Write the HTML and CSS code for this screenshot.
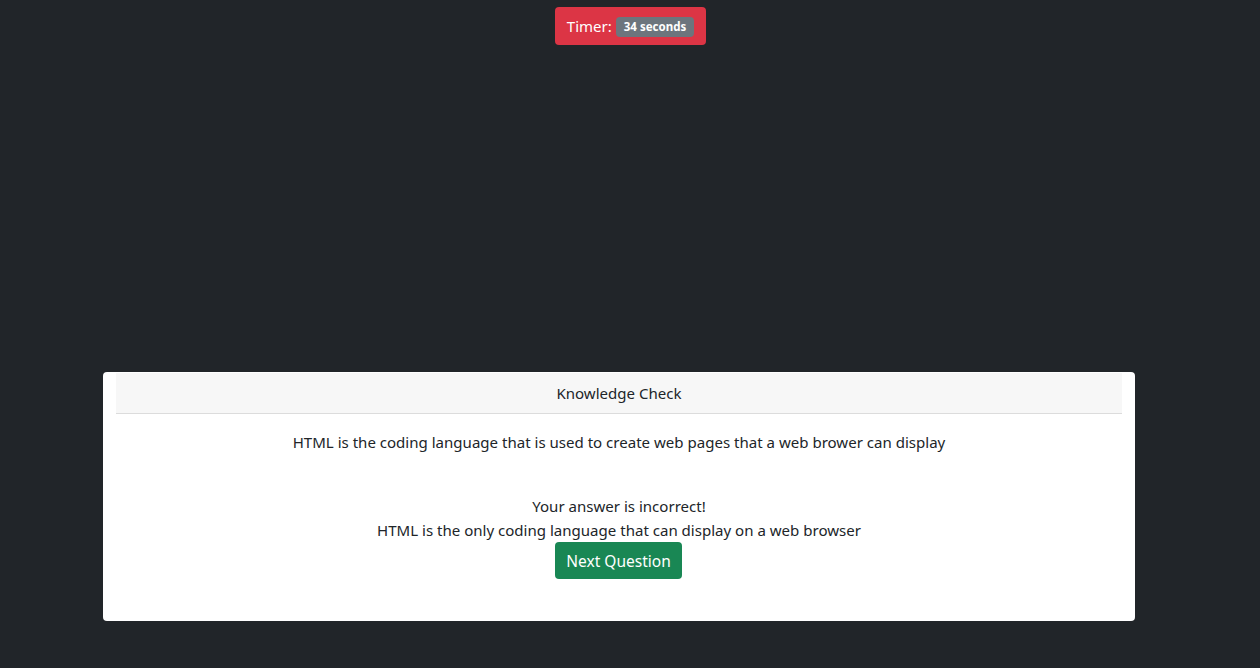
FILE: index.html
```html
<!DOCTYPE html>
<html lang="en">
<head>
<meta charset="utf-8">
<title>Knowledge Check</title>
<link rel="stylesheet" href="styles.css">
</head>
<body>
  <header class="top">
    <div class="timer">Timer: <span class="badge">34 seconds</span></div>
  </header>
  <main class="card">
    <div class="card-inner">
      <div class="card-header">Knowledge Check</div>
      <p class="question">HTML is the coding language that is used to create web pages that a web brower can display</p>
      <div class="result">
        <p>Your answer is incorrect!</p>
        <p>HTML is the only coding language that can display on a web browser</p>
        <button class="btn-next">Next Question</button>
      </div>
    </div>
  </main>
</body>
</html>
```
FILE: styles.css
```css
* { box-sizing: border-box; }
html, body { margin: 0; padding: 0; }
body {
  background: #212529;
  font-family: "Noto Sans", "Open Sans", sans-serif;
  font-size: 15.05px;
  color: #212529;
  height: 668px;
  overflow: hidden;
}
.top {
  display: flex;
  justify-content: center;
  padding-top: 7px;
}
.timer {
  background: #dc3545;
  color: #fff;
  border-radius: 4px;
  height: 38px;
  width: 151px;
  display: flex;
  align-items: center;
  justify-content: center;
  gap: 4px;
  font-size: 15px;
  margin-left: 1px;
}
.badge {
  background: #6c757d;
  color: #fff;
  font-weight: 700;
  font-size: 11.5px;
  border-radius: 4px;
  padding: 3px 8px 3px;
  line-height: 14px;
  margin-top: 1px;
}
.card {
  margin: 327px 0 0 103px;
  width: 1032px;
  height: 249px;
  background: #fff;
  border-radius: 4px;
  padding: 1px 13px 0;
}
.card-inner {
  display: flex;
  flex-direction: column;
  align-items: center;
  text-align: center;
}
.card-header {
  align-self: stretch;
  background: #f7f7f7;
  border-bottom: 1px solid #dcdcdc;
  height: 41px;
  display: flex;
  align-items: center;
  justify-content: center;
}
.question {
  margin: 16px 0 0;
  line-height: 24px;
}
.result {
  margin-top: 40px;
  display: flex;
  flex-direction: column;
  align-items: center;
}
.result p {
  margin: 0;
  line-height: 24px;
}
.btn-next {
  margin: 0 1px 0 0;
  background: #198754;
  color: #fff;
  border: none;
  border-radius: 4px;
  font-family: inherit;
  font-size: 15.5px;
  height: 37px;
  width: 127px;
  padding: 0;
}
```
